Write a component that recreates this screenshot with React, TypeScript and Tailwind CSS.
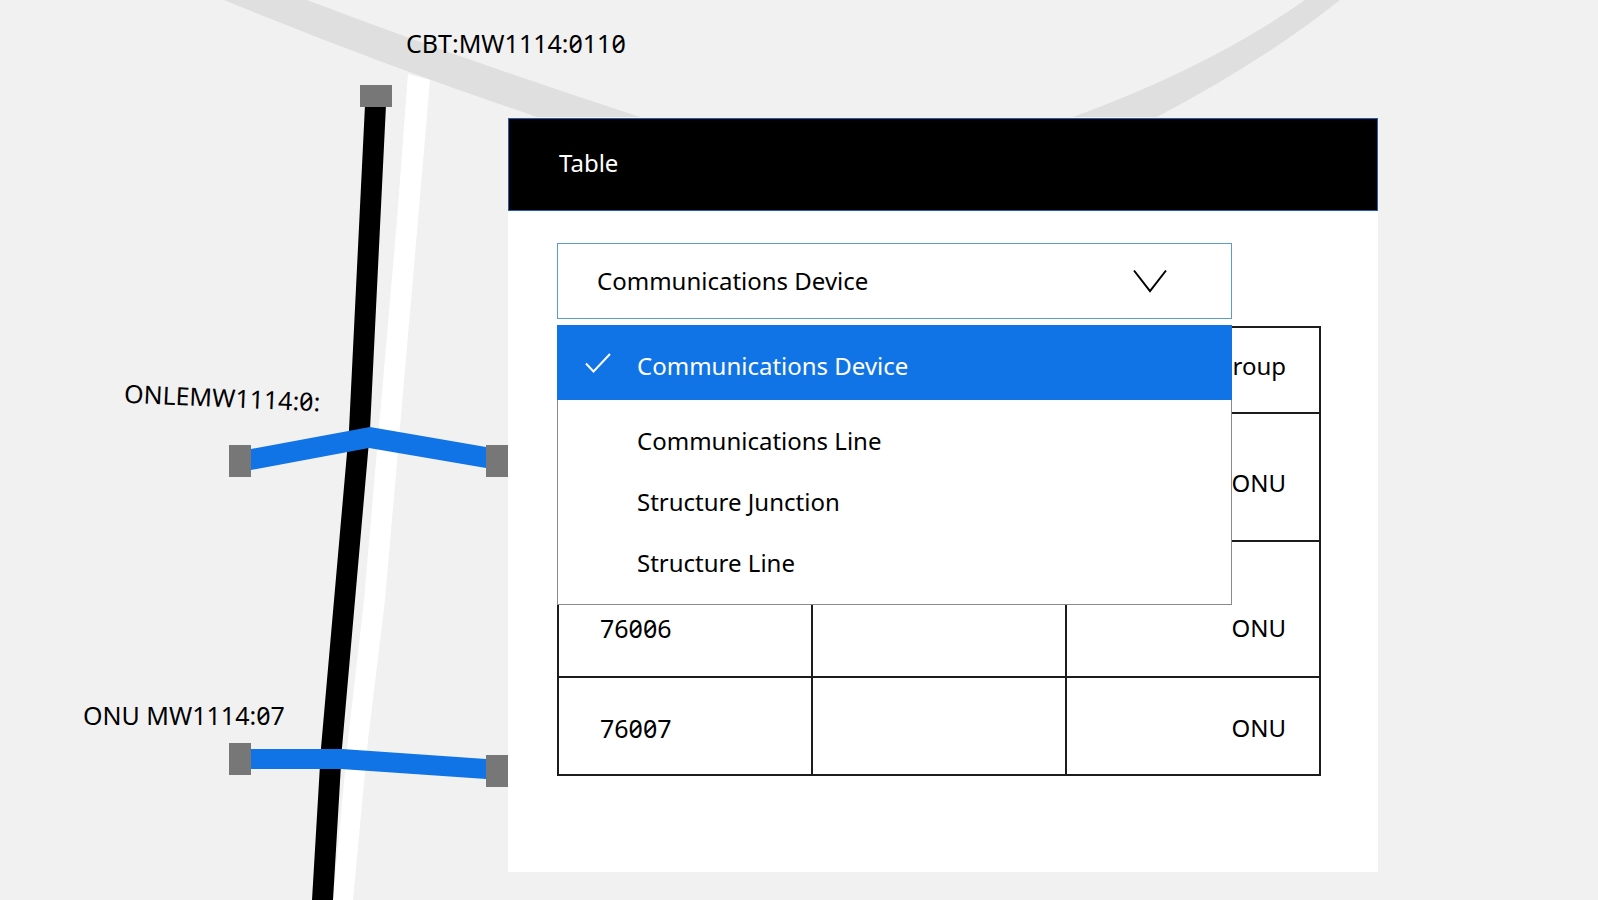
import { useState } from 'react'

const LAYERS = [
  'Communications Device',
  'Communications Line',
  'Structure Junction',
  'Structure Line',
]

const ROWS = [
  { id: '', name: '', group: 'ONU', height: 'h-[128px]', pad: 'pt-[53px]' },
  { id: '76006', name: '', group: 'ONU', height: 'h-[136px]', pad: 'pt-[70px]' },
  { id: '76007', name: '', group: 'ONU', height: 'h-[98px]', pad: 'pt-[34px]' },
]

const CELL = 'border-2 border-[#1c1c1c] align-top'

function NetworkMap() {
  return (
    <div className="absolute inset-0 overflow-hidden">
      <svg width="1598" height="900" viewBox="0 0 1598 900" fill="none" aria-hidden="true">
        {/* Road */}
        <path
          d="M224 0 Q380 64 537 117 L640 117 Q470 62 307 0 Z"
          fill="#dfdfdf"
        />
        <path
          d="M1073 117 Q1210 67 1305 0 L1340 0 Q1262 62 1157 117 Z"
          fill="#dfdfdf"
        />
        <path d="M408 74 L397 220 L364 600 L348 740 L333 900 H353 L368 740 L385 600 L418 220 L430 80 Z" fill="#fff" />

        {/* Trunk cable */}
        <path d="M365 105 L349 430 L321 748 L312 900 H333 L342 748 L370 430 L386 105 Z" fill="#000" />
        <rect x="360" y="85" width="32" height="22" fill="#777" />

        {/* Drops */}
        <path d="M251 449 L370 427 L486 447 V468 L369 448 L251 470 Z" fill="#1174e6" />
        <rect x="229" y="445" width="22" height="32" fill="#777" />
        <rect x="486" y="445" width="22" height="32" fill="#777" />

        <path d="M251 749 H342 L486 759 V779 L341 769 H251 Z" fill="#1174e6" />
        <rect x="229" y="743" width="22" height="32" fill="#777" />
        <rect x="486" y="755" width="22" height="32" fill="#777" />
      </svg>

      <span className="absolute top-[27px] left-[406px] text-[25px] leading-8 whitespace-nowrap">
        CBT:MW1114:0110
      </span>
      <span className="absolute top-[381px] left-[124px] rotate-[2.5deg] text-[25px] leading-8 whitespace-nowrap">
        ONLEMW1114:0:
      </span>
      <span className="absolute top-[699px] left-[83px] text-[25px] leading-8 whitespace-nowrap">
        ONU MW1114:07
      </span>
    </div>
  )
}

interface LayerSelectProps {
  value: string
  onChange: (value: string) => void
}

function LayerSelect({ value, onChange }: LayerSelectProps) {
  const [open, setOpen] = useState(true)

  return (
    <div className="relative mr-[89px] mb-[7px]">
      <select
        aria-label="Layer"
        value={value}
        onChange={(e) => onChange(e.target.value)}
        onMouseDown={(e) => {
          // The list below replaces the native popup
          e.preventDefault()
          setOpen(!open)
        }}
        className="block h-[76px] w-full appearance-none border border-[#5b9bd5] bg-white pl-[39px] text-[24px] leading-8 outline-none"
      >
        {LAYERS.map((layer) => (
          <option key={layer}>{layer}</option>
        ))}
      </select>
      <svg
        className="pointer-events-none absolute top-[26px] right-[65px]"
        width="34"
        height="24"
        viewBox="0 0 34 24"
        fill="none"
        stroke="#000"
        strokeWidth="2"
        aria-hidden="true"
      >
        <path d="M1 1.500 L17 22 L33 1.500" />
      </svg>

      {open && (
        <ul
          role="listbox"
          aria-label="Layers"
          className="absolute top-full right-0 left-0 z-10 mt-[6px] border border-t-0 border-[#8a8a8a] bg-white pb-[11px]"
        >
          {LAYERS.map((layer) => {
            const selected = layer === value
            return (
              <li
                key={layer}
                role="option"
                aria-selected={selected}
                onClick={() => {
                  onChange(layer)
                  setOpen(false)
                }}
                className={
                  selected
                    ? '-mx-px mb-[10px] flex h-[75px] cursor-pointer items-center gap-[26px] bg-[#1174e6] pl-[28px] text-white'
                    : 'flex h-[61px] cursor-pointer items-center pl-[79px]'
                }
              >
                {selected && (
                  <svg width="26" height="20" viewBox="0 0 26 20" fill="none" stroke="#fff" strokeWidth="2" aria-hidden="true">
                    <path d="M1 10.500 L8.500 18.500 L25 1" />
                  </svg>
                )}
                <span className={selected ? 'pt-[7px]' : ''}>{layer}</span>
              </li>
            )
          })}
        </ul>
      )}
    </div>
  )
}

function DeviceTable() {
  return (
    <table className="w-full table-fixed border-collapse">
      <thead>
        <tr className="h-[86px]">
          <th className={CELL} />
          <th className={CELL} />
          <th scope="col" className={`${CELL} pt-[22px] pr-[33px] text-right font-normal`}>
            group
          </th>
        </tr>
      </thead>
      <tbody>
        {ROWS.map((row, i) => (
          <tr key={i} className={row.height}>
            <td className={`${CELL} ${row.pad} pl-[41px] text-[25px]`}>{row.id}</td>
            <td className={CELL}>{row.name}</td>
            <td className={`${CELL} ${row.pad} pr-[33px] text-right`}>{row.group}</td>
          </tr>
        ))}
      </tbody>
    </table>
  )
}

export default function App() {
  const [layer, setLayer] = useState(LAYERS[0])

  return (
    <main className="relative min-h-screen overflow-hidden bg-[#f1f1f1] pt-[118px] pr-[220px] pb-7 pl-[508px] font-['Noto_Sans',sans-serif] text-[24px] leading-8 text-black slashed-zero">
      <NetworkMap />

      <section className="relative bg-white">
        <header className="flex h-[93px] items-center border border-[#1f5fae] bg-black pb-1 pl-[50px] text-white">
          <h1>Table</h1>
        </header>
        <div className="pt-8 pr-[57px] pb-24 pl-[49px]">
          <LayerSelect value={layer} onChange={setLayer} />
          <DeviceTable />
        </div>
      </section>
    </main>
  )
}
